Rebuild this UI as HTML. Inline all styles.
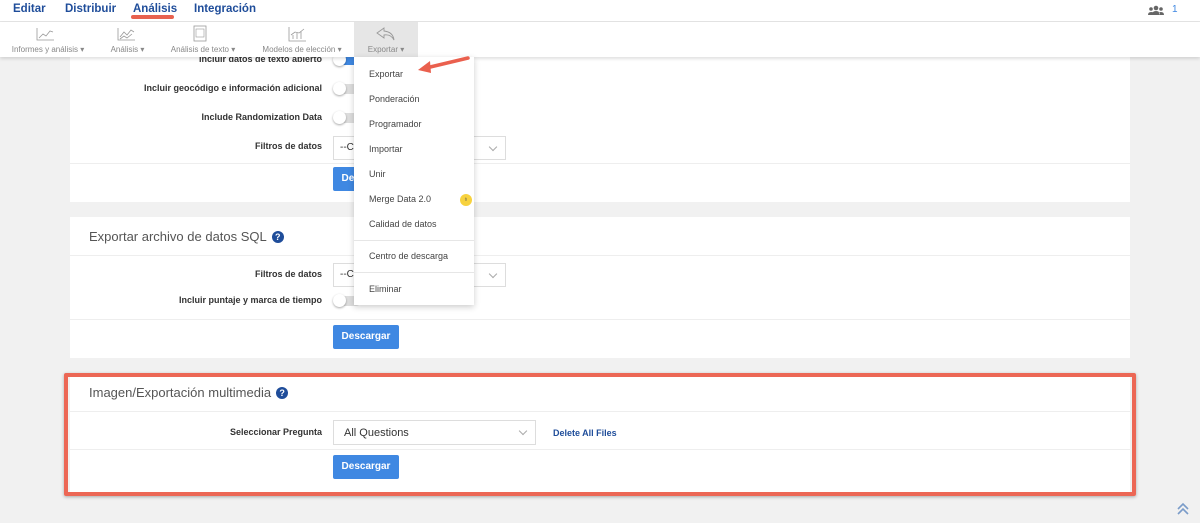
<!DOCTYPE html>
<html><head><meta charset="utf-8"><style>
*{box-sizing:border-box;margin:0;padding:0}
body{width:1200px;height:523px;overflow:hidden;background:#f1f1f1;font-family:"Liberation Sans",sans-serif;position:relative;color:#333}
.a{position:absolute}
.top{left:0;top:0;width:1200px;height:22px;background:#fff;border-bottom:1px solid #e4e4e4}
.top span{position:absolute;top:3px;font-size:11.5px;color:#1f4d9a;font-weight:bold}
.tb{left:0;top:22px;width:1200px;height:35px;background:#fff;box-shadow:0 2px 3px rgba(0,0,0,.12);z-index:3}
.tb .it{position:absolute;top:0;height:35px;font-size:8px;color:#888;text-align:center}
.tb .it div{position:absolute;bottom:3px;left:0;right:0;white-space:nowrap}
.card{background:#fff;left:70px;width:1060px}
.lbl{font-size:9px;font-weight:bold;color:#333;text-align:right;width:252px;left:70px}
.tg{width:26px;height:10px;border-radius:5px;background:#ddd}
.tg:before{content:"";position:absolute;left:-2px;top:-2px;width:13px;height:13px;border-radius:50%;background:#fff;box-shadow:0 1px 2px rgba(0,0,0,.35)}
.sel{border:1px solid #ddd;background:#fff;font-size:10px;color:#333;padding:5px 6px}
.sel:after{content:"";position:absolute;right:9px;top:7px;width:5px;height:5px;border-right:1px solid #aaa;border-bottom:1px solid #aaa;transform:rotate(45deg)}
.btn{background:#3f88e2;color:#fff;font-size:10px;font-weight:bold;border-radius:2px;text-align:center;line-height:24px;width:66px;height:24px;left:333px}
.hr{height:1px;background:#eee;left:70px;width:1060px}
.h{font-size:13px;color:#555}
.q{display:inline-block;width:12px;height:12px;border-radius:50%;background:#1f4d9a;color:#fff;font-size:9px;font-weight:bold;text-align:center;line-height:12px;vertical-align:1px;margin-left:5px}
.dd{left:354px;top:57px;width:120px;height:248px;background:#fff;box-shadow:0 2px 6px rgba(0,0,0,.2);z-index:4}
.dd span{position:absolute;left:15px;font-size:9px;color:#444}
.dd i{position:absolute;left:0;width:120px;height:1px;background:#e6e6e6}
</style></head><body>
<div class="a top">
<span style="left:13px">Editar</span><span style="left:65px">Distribuir</span><span style="left:133px">Análisis</span><span style="left:194px">Integración</span>
<div class="a" style="left:131px;top:15px;width:43px;height:4px;border-radius:2px;background:#e8624f"></div>
<svg class="a" style="left:1148px;top:5px" width="16" height="10" viewBox="0 0 16 10"><g fill="#666"><circle cx="8" cy="3" r="2.3"/><circle cx="3" cy="4" r="1.8"/><circle cx="13" cy="4" r="1.8"/><path d="M4 10q0-4 4-4t4 4zM0 10q0-3 3-3t2 1l-1 2zM16 10q0-3-3-3t-2 1l1 2z"/></g></svg>
<span style="left:1172px;color:#3f88e2;font-weight:normal;font-size:10px;top:4px">1</span>
</div>
<div class="a tb">
<div class="it" style="left:8px;width:80px"><svg class="a" style="left:28px;top:5px" width="18" height="14"><path d="M1 1v12h17M3 11l4-4 3 2 4-5 3 1" fill="none" stroke="#999" stroke-width=".8"/></svg><div>Informes y análisis ▾</div></div>
<div class="it" style="left:105px;width:45px"><svg class="a" style="left:12px;top:5px" width="18" height="14"><path d="M1 1v12h17M3 10l4-5 3 3 4-5 3 2M3 12l4-3 3 2 5-4" fill="none" stroke="#999" stroke-width=".8"/></svg><div>Análisis ▾</div></div>
<div class="it" style="left:168px;width:70px"><svg class="a" style="left:25px;top:3px" width="14" height="17"><rect x="1" y="1" width="12" height="15" fill="none" stroke="#999" stroke-width=".8"/><rect x="3" y="4" width="8" height="8" fill="none" stroke="#999" stroke-width=".6"/></svg><div>Análisis de texto ▾</div></div>
<div class="it" style="left:258px;width:88px"><svg class="a" style="left:30px;top:4px" width="18" height="16"><path d="M1 1v14h17M5 13v-4M9 13v-6M13 13v-8M3 9l4-3 4 1 5-4" fill="none" stroke="#999" stroke-width=".8"/></svg><div>Modelos de elección ▾</div></div>
<div class="it" style="left:354px;width:64px;background:#e6e6e6"><svg class="a" style="left:22px;top:5px" width="20" height="14"><path d="M8 1L1 6l7 5V8q7-1 10 5q-1-8-10-9z" fill="none" stroke="#999" stroke-width=".9"/></svg><div>Exportar ▾</div></div>
</div>
<!-- card1 -->
<div class="a card" style="top:57px;height:145px"></div>
<div class="a lbl" style="top:54px">Incluir datos de texto abierto</div>
<div class="a tg" style="left:335px;top:55px;background:#3f88e2"></div>
<div class="a lbl" style="top:83px">Incluir geocódigo e información adicional</div>
<div class="a tg" style="left:335px;top:84px"></div>
<div class="a lbl" style="top:112px">Include Randomization Data</div>
<div class="a tg" style="left:335px;top:113px"></div>
<div class="a lbl" style="top:141px">Filtros de datos</div>
<div class="a sel" style="left:333px;top:136px;width:173px;height:24px">--Co</div>
<div class="a hr" style="top:163px"></div>
<div class="a btn" style="top:167px">Descargar</div>
<!-- card2 -->
<div class="a card" style="top:217px;height:141px"></div>
<div class="a h" style="left:89px;top:229px">Exportar archivo de datos SQL<span class="q">?</span></div>
<div class="a hr" style="top:255px"></div>
<div class="a lbl" style="top:269px">Filtros de datos</div>
<div class="a sel" style="left:333px;top:263px;width:173px;height:24px">--Co</div>
<div class="a lbl" style="top:295px">Incluir puntaje y marca de tiempo</div>
<div class="a tg" style="left:335px;top:296px"></div>
<div class="a hr" style="top:319px"></div>
<div class="a btn" style="top:325px">Descargar</div>
<!-- card3 -->
<div class="a card" style="top:377px;height:115px"></div>
<div class="a h" style="left:89px;top:385px">Imagen/Exportación multimedia<span class="q">?</span></div>
<div class="a hr" style="top:411px"></div>
<div class="a lbl" style="top:427px">Seleccionar Pregunta</div>
<div class="a sel" style="left:333px;top:420px;width:203px;height:25px;font-size:11px;padding:6px 10px">All Questions</div>
<div class="a" style="left:553px;top:428px;font-size:9px;color:#1f4d9a;font-weight:bold">Delete All Files</div>
<div class="a hr" style="top:449px"></div>
<div class="a btn" style="top:455px">Descargar</div>
<div class="a" style="left:64px;top:373px;width:1072px;height:123px;border:4px solid #ec6755;border-radius:2px;box-shadow:0 1px 3px rgba(0,0,0,.3)"></div>
<svg class="a" style="left:1176px;top:502px" width="14" height="14"><path d="M2 7l5-5 5 5M2 12l5-5 5 5" fill="none" stroke="#7a9cc9" stroke-width="1.6"/></svg>
<!-- dropdown -->
<div class="a dd">
<span style="top:12px">Exportar</span><span style="top:37px">Ponderación</span><span style="top:62px">Programador</span><span style="top:87px">Importar</span><span style="top:112px">Unir</span><span style="top:137px">Merge Data 2.0</span><span style="top:162px">Calidad de datos</span><i style="top:183px"></i><span style="top:194px">Centro de descarga</span><i style="top:215px"></i><span style="top:227px">Eliminar</span>
<div class="a" style="left:106px;top:137px;width:12px;height:12px;border-radius:50%;background:#f7d23e;font-size:7px;text-align:center;line-height:12px;color:#555">♁</div>
</div>
<svg class="a" style="left:414px;top:52px;z-index:5" width="60" height="24"><path d="M54 6L12 16" stroke="#ea604e" stroke-width="3.5" stroke-linecap="round"/><path d="M4 18l12-9 1 12z" fill="#ea604e"/></svg>
</body></html>
